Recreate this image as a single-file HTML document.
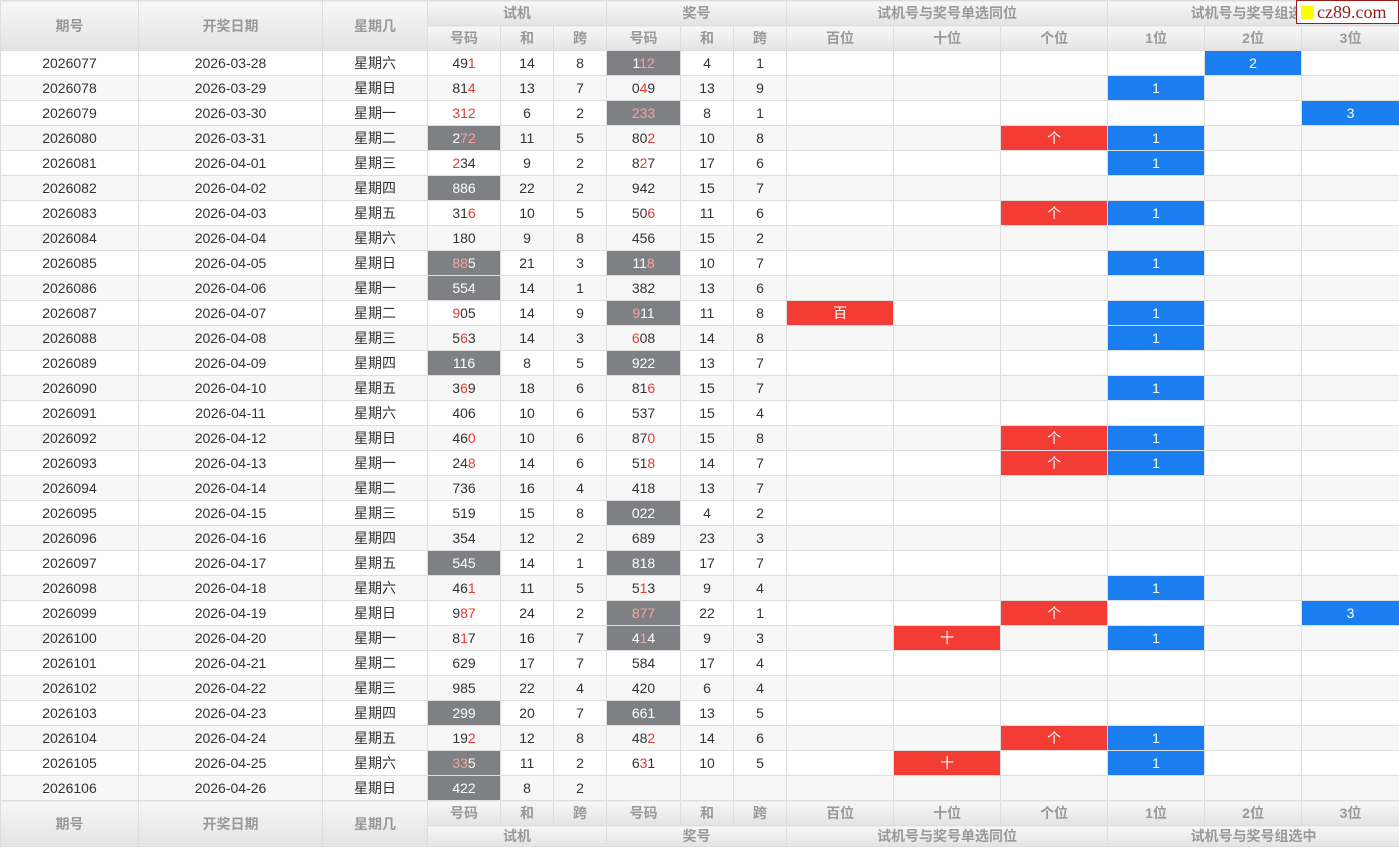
<!DOCTYPE html>
<html><head><meta charset="utf-8"><style>
*{margin:0;padding:0;box-sizing:border-box}
body{width:1399px;height:848px;overflow:hidden;background:#fff;font-family:"Liberation Sans","Noto Sans CJK SC",sans-serif;font-size:14px;color:#333}
table{border-collapse:collapse;table-layout:fixed;width:1399px}
td,th{border:1px solid #ddd;text-align:center;height:25px;padding:0;white-space:nowrap;overflow:hidden}
th{background:linear-gradient(#f7f7f7,#e3e3e3);color:#999;font-weight:bold;font-size:14px}
tbody tr:nth-child(even) td{background:#f7f7f7}
i{font-style:normal;color:#e83a32}
tbody td.g{background:#7e8084!important;color:#fff}
td.g i{color:#f7a2a2}
tbody td.b{background:#1a7ef0!important;color:#fff}
tbody td.r{background:#f33c33!important;color:#fff}
td.L{border-left:1px solid #000}
tr.h1 th{height:25px}
.logo{position:absolute;left:1296px;top:0;width:103px;height:24px;background:#fff;border:1px solid #9b1b1b;color:#9b1b1b;font-family:"Liberation Serif",serif;font-size:18px;line-height:22px;padding-left:20px}
.logo:before{content:"";position:absolute;left:4px;top:5px;width:13px;height:13px;background:#ff0}
</style></head><body>
<table>
<colgroup><col style="width:138px"><col style="width:184px"><col style="width:105px"><col style="width:73px"><col style="width:53px"><col style="width:53px"><col style="width:74px"><col style="width:53px"><col style="width:53px"><col style="width:107px"><col style="width:107px"><col style="width:107px"><col style="width:97px"><col style="width:97px"><col style="width:98px"></colgroup>
<thead>
<tr class="h1"><th rowspan="2">期号</th><th rowspan="2">开奖日期</th><th rowspan="2">星期几</th><th colspan="3">试机</th><th colspan="3">奖号</th><th colspan="3">试机号与奖号单选同位</th><th colspan="3">试机号与奖号组选中</th></tr>
<tr class="h1"><th>号码</th><th>和</th><th>跨</th><th>号码</th><th>和</th><th>跨</th><th>百位</th><th>十位</th><th>个位</th><th>1位</th><th>2位</th><th>3位</th></tr>
</thead>
<tbody>
<tr><td>2026077</td><td>2026-03-28</td><td>星期六</td><td>49<i>1</i></td><td>14</td><td>8</td><td class="g L">1<i>12</i></td><td>4</td><td>1</td><td class="L"></td><td></td><td></td><td class="L"></td><td class="b">2</td><td></td></tr>
<tr><td>2026078</td><td>2026-03-29</td><td>星期日</td><td>81<i>4</i></td><td>13</td><td>7</td><td class="L">0<i>4</i>9</td><td>13</td><td>9</td><td class="L"></td><td></td><td></td><td class="L b">1</td><td></td><td></td></tr>
<tr><td>2026079</td><td>2026-03-30</td><td>星期一</td><td><i>312</i></td><td>6</td><td>2</td><td class="g L"><i>233</i></td><td>8</td><td>1</td><td class="L"></td><td></td><td></td><td class="L"></td><td></td><td class="b">3</td></tr>
<tr><td>2026080</td><td>2026-03-31</td><td>星期二</td><td class="g">2<i>72</i></td><td>11</td><td>5</td><td class="L">80<i>2</i></td><td>10</td><td>8</td><td class="L"></td><td></td><td class="r">个</td><td class="L b">1</td><td></td><td></td></tr>
<tr><td>2026081</td><td>2026-04-01</td><td>星期三</td><td><i>2</i>34</td><td>9</td><td>2</td><td class="L">8<i>2</i>7</td><td>17</td><td>6</td><td class="L"></td><td></td><td></td><td class="L b">1</td><td></td><td></td></tr>
<tr><td>2026082</td><td>2026-04-02</td><td>星期四</td><td class="g">886</td><td>22</td><td>2</td><td class="L">942</td><td>15</td><td>7</td><td class="L"></td><td></td><td></td><td class="L"></td><td></td><td></td></tr>
<tr><td>2026083</td><td>2026-04-03</td><td>星期五</td><td>31<i>6</i></td><td>10</td><td>5</td><td class="L">50<i>6</i></td><td>11</td><td>6</td><td class="L"></td><td></td><td class="r">个</td><td class="L b">1</td><td></td><td></td></tr>
<tr><td>2026084</td><td>2026-04-04</td><td>星期六</td><td>180</td><td>9</td><td>8</td><td class="L">456</td><td>15</td><td>2</td><td class="L"></td><td></td><td></td><td class="L"></td><td></td><td></td></tr>
<tr><td>2026085</td><td>2026-04-05</td><td>星期日</td><td class="g"><i>88</i>5</td><td>21</td><td>3</td><td class="g L">11<i>8</i></td><td>10</td><td>7</td><td class="L"></td><td></td><td></td><td class="L b">1</td><td></td><td></td></tr>
<tr><td>2026086</td><td>2026-04-06</td><td>星期一</td><td class="g">554</td><td>14</td><td>1</td><td class="L">382</td><td>13</td><td>6</td><td class="L"></td><td></td><td></td><td class="L"></td><td></td><td></td></tr>
<tr><td>2026087</td><td>2026-04-07</td><td>星期二</td><td><i>9</i>05</td><td>14</td><td>9</td><td class="g L"><i>9</i>11</td><td>11</td><td>8</td><td class="L r">百</td><td></td><td></td><td class="L b">1</td><td></td><td></td></tr>
<tr><td>2026088</td><td>2026-04-08</td><td>星期三</td><td>5<i>6</i>3</td><td>14</td><td>3</td><td class="L"><i>6</i>08</td><td>14</td><td>8</td><td class="L"></td><td></td><td></td><td class="L b">1</td><td></td><td></td></tr>
<tr><td>2026089</td><td>2026-04-09</td><td>星期四</td><td class="g">116</td><td>8</td><td>5</td><td class="g L">922</td><td>13</td><td>7</td><td class="L"></td><td></td><td></td><td class="L"></td><td></td><td></td></tr>
<tr><td>2026090</td><td>2026-04-10</td><td>星期五</td><td>3<i>6</i>9</td><td>18</td><td>6</td><td class="L">81<i>6</i></td><td>15</td><td>7</td><td class="L"></td><td></td><td></td><td class="L b">1</td><td></td><td></td></tr>
<tr><td>2026091</td><td>2026-04-11</td><td>星期六</td><td>406</td><td>10</td><td>6</td><td class="L">537</td><td>15</td><td>4</td><td class="L"></td><td></td><td></td><td class="L"></td><td></td><td></td></tr>
<tr><td>2026092</td><td>2026-04-12</td><td>星期日</td><td>46<i>0</i></td><td>10</td><td>6</td><td class="L">87<i>0</i></td><td>15</td><td>8</td><td class="L"></td><td></td><td class="r">个</td><td class="L b">1</td><td></td><td></td></tr>
<tr><td>2026093</td><td>2026-04-13</td><td>星期一</td><td>24<i>8</i></td><td>14</td><td>6</td><td class="L">51<i>8</i></td><td>14</td><td>7</td><td class="L"></td><td></td><td class="r">个</td><td class="L b">1</td><td></td><td></td></tr>
<tr><td>2026094</td><td>2026-04-14</td><td>星期二</td><td>736</td><td>16</td><td>4</td><td class="L">418</td><td>13</td><td>7</td><td class="L"></td><td></td><td></td><td class="L"></td><td></td><td></td></tr>
<tr><td>2026095</td><td>2026-04-15</td><td>星期三</td><td>519</td><td>15</td><td>8</td><td class="g L">022</td><td>4</td><td>2</td><td class="L"></td><td></td><td></td><td class="L"></td><td></td><td></td></tr>
<tr><td>2026096</td><td>2026-04-16</td><td>星期四</td><td>354</td><td>12</td><td>2</td><td class="L">689</td><td>23</td><td>3</td><td class="L"></td><td></td><td></td><td class="L"></td><td></td><td></td></tr>
<tr><td>2026097</td><td>2026-04-17</td><td>星期五</td><td class="g">545</td><td>14</td><td>1</td><td class="g L">818</td><td>17</td><td>7</td><td class="L"></td><td></td><td></td><td class="L"></td><td></td><td></td></tr>
<tr><td>2026098</td><td>2026-04-18</td><td>星期六</td><td>46<i>1</i></td><td>11</td><td>5</td><td class="L">5<i>1</i>3</td><td>9</td><td>4</td><td class="L"></td><td></td><td></td><td class="L b">1</td><td></td><td></td></tr>
<tr><td>2026099</td><td>2026-04-19</td><td>星期日</td><td>9<i>87</i></td><td>24</td><td>2</td><td class="g L"><i>877</i></td><td>22</td><td>1</td><td class="L"></td><td></td><td class="r">个</td><td class="L"></td><td></td><td class="b">3</td></tr>
<tr><td>2026100</td><td>2026-04-20</td><td>星期一</td><td>8<i>1</i>7</td><td>16</td><td>7</td><td class="g L">4<i>1</i>4</td><td>9</td><td>3</td><td class="L"></td><td class="r">十</td><td></td><td class="L b">1</td><td></td><td></td></tr>
<tr><td>2026101</td><td>2026-04-21</td><td>星期二</td><td>629</td><td>17</td><td>7</td><td class="L">584</td><td>17</td><td>4</td><td class="L"></td><td></td><td></td><td class="L"></td><td></td><td></td></tr>
<tr><td>2026102</td><td>2026-04-22</td><td>星期三</td><td>985</td><td>22</td><td>4</td><td class="L">420</td><td>6</td><td>4</td><td class="L"></td><td></td><td></td><td class="L"></td><td></td><td></td></tr>
<tr><td>2026103</td><td>2026-04-23</td><td>星期四</td><td class="g">299</td><td>20</td><td>7</td><td class="g L">661</td><td>13</td><td>5</td><td class="L"></td><td></td><td></td><td class="L"></td><td></td><td></td></tr>
<tr><td>2026104</td><td>2026-04-24</td><td>星期五</td><td>19<i>2</i></td><td>12</td><td>8</td><td class="L">48<i>2</i></td><td>14</td><td>6</td><td class="L"></td><td></td><td class="r">个</td><td class="L b">1</td><td></td><td></td></tr>
<tr><td>2026105</td><td>2026-04-25</td><td>星期六</td><td class="g"><i>33</i>5</td><td>11</td><td>2</td><td class="L">6<i>3</i>1</td><td>10</td><td>5</td><td class="L"></td><td class="r">十</td><td></td><td class="L b">1</td><td></td><td></td></tr>
<tr><td>2026106</td><td>2026-04-26</td><td>星期日</td><td class="g">422</td><td>8</td><td>2</td><td class="L"></td><td></td><td></td><td class="L"></td><td></td><td></td><td class="L"></td><td></td><td></td></tr>
</tbody>
<tfoot>
<tr><th rowspan="2">期号</th><th rowspan="2">开奖日期</th><th rowspan="2">星期几</th><th>号码</th><th>和</th><th>跨</th><th>号码</th><th>和</th><th>跨</th><th>百位</th><th>十位</th><th>个位</th><th>1位</th><th>2位</th><th>3位</th></tr>
<tr><th colspan="3" style="height:20px">试机</th><th colspan="3" style="height:20px">奖号</th><th colspan="3" style="height:20px">试机号与奖号单选同位</th><th colspan="3" style="height:20px">试机号与奖号组选中</th></tr>
</tfoot>
</table>
<div class="logo">cz89.com</div>
</body></html>
